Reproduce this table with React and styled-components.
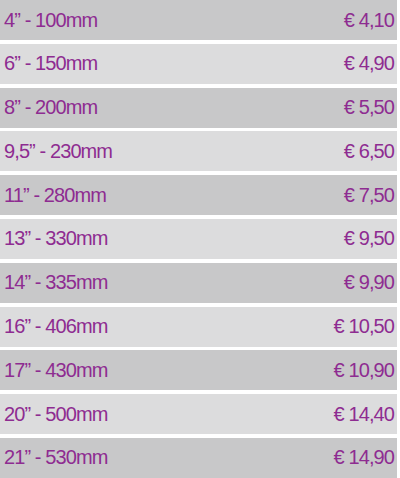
import React from 'react';
import styled, { createGlobalStyle } from 'styled-components';

const GlobalStyle = createGlobalStyle`
  html, body {
    margin: 0;
    padding: 0;
    background: #fff;
  }
`;

const PriceList = styled.div`
  display: flex;
  flex-direction: column;
  justify-content: space-between;
  width: 397px;
  height: 478px;
  font-family: 'Liberation Sans', Arial, sans-serif;
`;

const Row = styled.div`
  display: flex;
  align-items: center;
  justify-content: space-between;
  height: 40px;
  padding: 0 3px 0 4px;
  background-color: ${({ shade }) => (shade ? '#c8c8c9' : '#dcdcdd')};
  color: #8e2c91;
  font-size: 20px;
  letter-spacing: -0.9px;
`;

const Size = styled.span``;

const Price = styled.span``;

const rows = [
  ['4” - 100mm', '€ 4,10'],
  ['6” - 150mm', '€ 4,90'],
  ['8” - 200mm', '€ 5,50'],
  ['9,5” - 230mm', '€ 6,50'],
  ['11” - 280mm', '€ 7,50'],
  ['13” - 330mm', '€ 9,50'],
  ['14” - 335mm', '€ 9,90'],
  ['16” - 406mm', '€ 10,50'],
  ['17” - 430mm', '€ 10,90'],
  ['20” - 500mm', '€ 14,40'],
  ['21” - 530mm', '€ 14,90'],
];

const App = () => {
  return (
    <>
      <GlobalStyle />
      <PriceList>
        {rows.map(([size, price], index) => (
          <Row key={size} shade={index % 2 === 0}>
            <Size>{size}</Size>
            <Price>{price}</Price>
          </Row>
        ))}
      </PriceList>
    </>
  );
};

export default App;
